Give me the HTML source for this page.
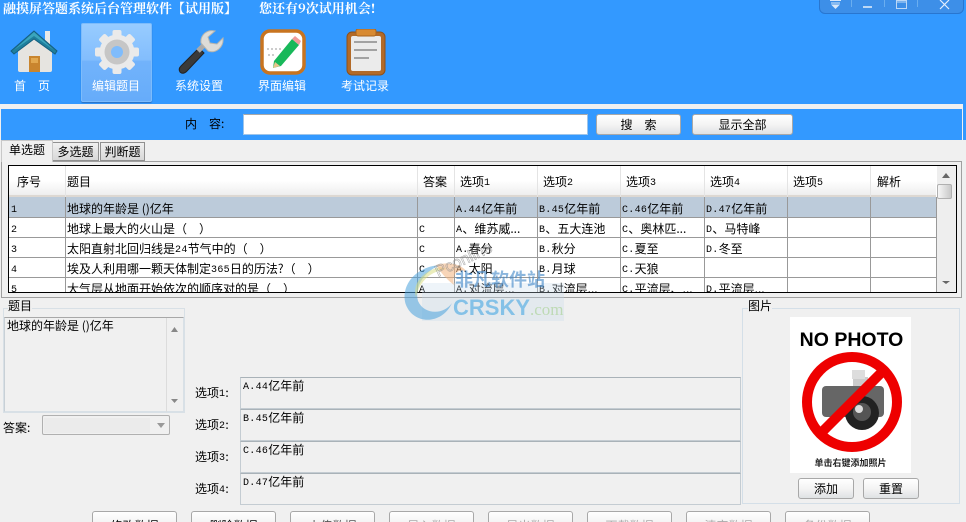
<!DOCTYPE html>
<html style="width:966px;height:522px;overflow:hidden"><head><meta charset="utf-8"><style>
*{box-sizing:border-box}
html,body{margin:0;padding:0}
body{width:966px;height:522px;overflow:hidden;background:#f0f0f0}
#w{width:966px;height:522px;position:relative;overflow:hidden;background:#f0f0f0;font:12px "WenQuanYi Zen Hei","Noto Sans CJK SC",sans-serif;color:#000}
.a{position:absolute}
.t{position:absolute;white-space:pre;line-height:14px}
.nav{color:#fff;font-size:12px;line-height:14px;position:absolute;white-space:pre;top:79px}
.btn{position:absolute;background:linear-gradient(#fff,#f4f4f4 50%,#dfe2e4);border:1px solid #a8a8a8;border-radius:3px;text-align:center;font-size:12px}
.bb{top:511px;width:85px;height:24px;line-height:27px}
.cell{position:absolute;white-space:pre;font-size:12px;line-height:20px;overflow:hidden;margin-top:1px}
.opt{position:absolute;left:240px;width:501px;height:32px;background:#f0f0f0;border:1px solid #c4ccd2;border-top:1px solid #a9b2b8;padding:1px 0 0 2px;font-size:12px;line-height:14px;white-space:pre}
.lab{position:absolute;left:195px;font-size:12px;line-height:14px;white-space:pre}
i{font:10px "Liberation Mono",monospace;letter-spacing:.3px;vertical-align:1px}
.tb{top:142px;height:19px;background:linear-gradient(#f0f0f0,#d8d8d8);border:1px solid #909090;font-size:12px;line-height:18px;text-align:center}
</style></head><body><div id="w">
<div class="a" style="left:0;top:0;width:966px;height:104px;background:#3399ff"></div>
<div class="t" style="left:3px;top:0;color:#fff;font:bold 13px/16px 'Noto Serif CJK SC',serif">融摸屏答题系统后台管理软件【试用版】</div>
<div class="t" style="left:259px;top:0;color:#fff;font:bold 13px/16px 'Noto Serif CJK SC',serif">您还有9次试用机会!</div>

<div class="a" style="left:819px;top:-4px;width:145px;height:18px;background:#3d8fe8;border:1px solid #2876d0;border-radius:0 0 6px 6px"></div>
<svg class="a" style="left:819px;top:0" width="145" height="15"><g stroke="#bcd8f6" fill="none"><path d="M32.500 0V7M65.500 0V7M98.500 0V7" stroke="#6aaef0"/><path d="M11 .5H22M12 3H21" stroke="#d8e8fa"/><path d="M12 4.500H21L16.500 9Z" fill="#d8e8fa" stroke="none"/><path d="M44 7H53" stroke-width="2" stroke="#bcd8f6"/><path d="M77.500 .5H87.500V8.500H77.500Z M78 2H87"/><path d="M121 0L130 9M130 0L121 9" stroke="#e3effc" stroke-width="1.200"/></g></svg>

<div class="a" style="left:81px;top:23px;width:71px;height:79px;border:1px solid #7dbcfb;border-radius:2px;background:linear-gradient(#98ccff 0,#82bdfd 47%,#72b3fb 48%,#66acfa 100%);box-shadow:0 1px 1px #2a6fc0"></div>

<svg class="a" style="left:8px;top:28px" width="52" height="50" viewBox="0 0 52 50">
<path d="M37 3h5v16h-5z" fill="#e8e8e8"/>
<path d="M10 22L27 9L44 22V42a2 2 0 0 1-2 2H12a2 2 0 0 1-2-2Z" fill="#e6e4e0"/>
<path d="M3 23L26 3L49 23L47 26L26 11L6 26Z" fill="#1f7f9d" stroke="#155f7f"/>
<path d="M6 22L26 4L46 22L26 8Z" fill="#3aa5bd"/>
<rect x="21" y="28" width="11" height="16" fill="#c9852e"/><rect x="23" y="30" width="7" height="5" fill="#e2a84f"/>
</svg>

<svg class="a" style="left:94px;top:29px" width="46" height="46" viewBox="0 0 46 46">
<g fill="#eaeaea"><circle cx="23" cy="23" r="17.500"/>
<g><rect x="18.500" y="1" width="9" height="8" rx="2"/><rect x="18.500" y="37" width="9" height="8" rx="2"/><rect x="1" y="18.500" width="8" height="9" rx="2"/><rect x="37" y="18.500" width="8" height="9" rx="2"/></g>
<g transform="rotate(45 23 23)"><rect x="18.500" y="1" width="9" height="8" rx="2"/><rect x="18.500" y="37" width="9" height="8" rx="2"/><rect x="1" y="18.500" width="8" height="9" rx="2"/><rect x="37" y="18.500" width="8" height="9" rx="2"/></g></g>
<circle cx="23" cy="23" r="12.500" fill="#c6c6c6"/><circle cx="23" cy="23" r="6" fill="#7fbcfc"/></svg>

<svg class="a" style="left:177px;top:29px" width="48" height="48" viewBox="0 0 48 48">
<path d="M4 37L22 19L27 24L10 42Q6 46 3 43Q1 40 4 37Z" fill="#3a3a3a" stroke="#222"/>
<path d="M21 22L28 15" stroke="#aaa" stroke-width="5"/>
<path d="M24 14C23 6 30 0 38 2L31 8L33 14L40 15L46 9C47 18 39 25 31 22Z" fill="#dddcd8" stroke="#b5b5b0"/>
</svg>

<svg class="a" style="left:260px;top:29px" width="46" height="46" viewBox="0 0 46 46">
<rect x="2" y="2" width="42" height="42" rx="8" fill="#fff" stroke="#c87420" stroke-width="3.500"/>
<path d="M7 20h14M8 26h8" stroke="#999" stroke-dasharray="2 2"/>
<path d="M14 32L32 10L39 16L21 37L13 39Z" fill="#18b85a"/><path d="M32 10L35 7L41 12L39 16Z" fill="#f09a9a"/><path d="M15 33L13 39L20 37Z" fill="#e8c48c"/>
</svg>

<svg class="a" style="left:345px;top:29px" width="42" height="48" viewBox="0 0 42 48">
<rect x="2" y="3" width="38" height="43" rx="5" fill="#b26a28" stroke="#8f5018"/>
<rect x="6" y="7" width="30" height="35" rx="2" fill="#ebebeb"/>
<rect x="11" y="0" width="20" height="7" rx="2" fill="#d88a32" stroke="#a86420"/>
<path d="M9 13H32M9 21H32M9 29H24" stroke="#8a8a8a" stroke-width="1.500"/>
</svg>

<div class="nav" style="left:14px">首　页</div>
<div class="nav" style="left:92px">编辑题目</div>
<div class="nav" style="left:175px">系统设置</div>
<div class="nav" style="left:258px">界面编辑</div>
<div class="nav" style="left:341px">考试记录</div>

<div class="a" style="left:0;top:104px;width:966px;height:5px;background:#f0f0f0"></div>
<div class="a" style="left:963px;top:104px;width:3px;height:36px;background:#3399ff"></div>
<div class="a" style="left:0;top:104px;width:1px;height:418px;background:#f0f0f0"></div>
<div class="a" style="left:1px;top:109px;width:961px;height:31px;background:#3399ff"></div>
<div class="t" style="left:185px;top:117px;font-size:12px">内　容:</div>
<div class="a" style="left:243px;top:114px;width:345px;height:21px;background:#fff;border:1px solid #9dc4ea;border-top-color:#a8a8a8"></div>
<div class="btn" style="left:596px;top:114px;width:85px;height:21px;line-height:19px">搜　索</div>
<div class="btn" style="left:692px;top:114px;width:101px;height:21px;line-height:19px">显示全部</div>

<div class="a" style="left:1px;top:161px;width:961px;height:137px;border:1px solid #a0a0a0;background:#f0f0f0"></div>
<div class="a tb" style="left:52px;width:47px">多选题</div>
<div class="a tb" style="left:100px;width:45px">判断题</div>
<div class="a" style="left:1px;top:140px;width:52px;height:22px;background:#f0f0f0;border:1px solid #c8c8c8;border-bottom:0;font-size:12px;line-height:18px;text-align:center">单选题</div>

<div class="a" style="left:8px;top:165px;width:949px;height:128px;background:#fff;border:1px solid #000;overflow:hidden">
<div class="a" style="left:0;top:0;width:927px;height:31px;background:linear-gradient(#fff,#fff 50%,#eee);border-bottom:2px solid #ddd8d2"></div>
<div class="a" style="left:0;top:31px;width:927px;height:20px;background:#bccbda"></div>
<div class="a" style="left:0;top:51px;width:927px;height:1px;background:#999"></div>
<div class="a" style="left:0;top:71px;width:927px;height:1px;background:#999"></div>
<div class="a" style="left:0;top:91px;width:927px;height:1px;background:#999"></div>
<div class="a" style="left:0;top:111px;width:927px;height:1px;background:#999"></div>
<div class="a" style="left:56px;top:31px;width:1px;height:96px;background:#999"></div>
<div class="a" style="left:408px;top:31px;width:1px;height:96px;background:#999"></div>
<div class="a" style="left:445px;top:31px;width:1px;height:96px;background:#999"></div>
<div class="a" style="left:528px;top:31px;width:1px;height:96px;background:#999"></div>
<div class="a" style="left:611px;top:31px;width:1px;height:96px;background:#999"></div>
<div class="a" style="left:695px;top:31px;width:1px;height:96px;background:#999"></div>
<div class="a" style="left:778px;top:31px;width:1px;height:96px;background:#999"></div>
<div class="a" style="left:861px;top:31px;width:1px;height:96px;background:#999"></div>
<div class="a" style="left:927px;top:31px;width:1px;height:96px;background:#999"></div>
<div class="a" style="left:56px;top:0;width:1px;height:31px;background:#e4e4e4"></div>
<div class="a" style="left:408px;top:0;width:1px;height:31px;background:#e4e4e4"></div>
<div class="a" style="left:445px;top:0;width:1px;height:31px;background:#e4e4e4"></div>
<div class="a" style="left:528px;top:0;width:1px;height:31px;background:#e4e4e4"></div>
<div class="a" style="left:611px;top:0;width:1px;height:31px;background:#e4e4e4"></div>
<div class="a" style="left:695px;top:0;width:1px;height:31px;background:#e4e4e4"></div>
<div class="a" style="left:778px;top:0;width:1px;height:31px;background:#e4e4e4"></div>
<div class="a" style="left:861px;top:0;width:1px;height:31px;background:#e4e4e4"></div>

<div class="cell" style="left:8px;top:5px">序号</div>
<div class="cell" style="left:58px;top:5px">题目</div>
<div class="cell" style="left:414px;top:5px">答案</div>
<div class="cell" style="left:451px;top:5px">选项<i>1</i></div>
<div class="cell" style="left:534px;top:5px">选项<i>2</i></div>
<div class="cell" style="left:617px;top:5px">选项<i>3</i></div>
<div class="cell" style="left:701px;top:5px">选项<i>4</i></div>
<div class="cell" style="left:784px;top:5px">选项<i>5</i></div>
<div class="cell" style="left:868px;top:5px">解析</div>

<div class="cell" style="left:2px;top:32px"><i>1</i></div><div class="cell" style="left:58px;top:32px">地球的年龄是 ()亿年</div><div class="cell" style="left:447px;top:32px"><i>A.44</i>亿年前</div><div class="cell" style="left:530px;top:32px"><i>B.45</i>亿年前</div><div class="cell" style="left:613px;top:32px"><i>C.46</i>亿年前</div><div class="cell" style="left:697px;top:32px"><i>D.47</i>亿年前</div>
<div class="cell" style="left:2px;top:52px"><i>2</i></div><div class="cell" style="left:58px;top:52px">地球上最大的火山是（　）</div><div class="cell" style="left:410px;top:52px"><i>C</i></div><div class="cell" style="left:447px;top:52px"><i>A</i>、维苏威...</div><div class="cell" style="left:530px;top:52px"><i>B</i>、五大连池</div><div class="cell" style="left:613px;top:52px"><i>C</i>、奥林匹...</div><div class="cell" style="left:697px;top:52px"><i>D</i>、马特峰</div>
<div class="cell" style="left:2px;top:72px"><i>3</i></div><div class="cell" style="left:58px;top:72px">太阳直射北回归线是<i>24</i>节气中的（　）</div><div class="cell" style="left:410px;top:72px"><i>C</i></div><div class="cell" style="left:447px;top:72px"><i>A.</i>春分</div><div class="cell" style="left:530px;top:72px"><i>B.</i>秋分</div><div class="cell" style="left:613px;top:72px"><i>C.</i>夏至</div><div class="cell" style="left:697px;top:72px"><i>D.</i>冬至</div>
<div class="cell" style="left:2px;top:92px"><i>4</i></div><div class="cell" style="left:58px;top:92px">埃及人利用哪一颗天体制定<i>365</i>日的历法?（　）</div><div class="cell" style="left:410px;top:92px"><i>C</i></div><div class="cell" style="left:447px;top:92px"><i>A.</i>太阳</div><div class="cell" style="left:530px;top:92px"><i>B.</i>月球</div><div class="cell" style="left:613px;top:92px"><i>C.</i>天狼</div>
<div class="cell" style="left:2px;top:112px"><i>5</i></div><div class="cell" style="left:58px;top:112px">大气层从地面开始依次的顺序对的是（　）</div><div class="cell" style="left:410px;top:112px"><i>A</i></div><div class="cell" style="left:447px;top:112px"><i>A.</i>对流层...</div><div class="cell" style="left:530px;top:112px"><i>B.</i>对流层...</div><div class="cell" style="left:613px;top:112px"><i>C.</i>平流层、...</div><div class="cell" style="left:697px;top:112px"><i>D.</i>平流层...</div>

<div class="a" style="left:928px;top:0;width:19px;height:126px;background:#eeeeee"></div>
<div class="a" style="left:928px;top:18px;width:15px;height:15px;background:linear-gradient(90deg,#f6f6f6,#c8c8c8);border:1px solid #b0b0b0;border-radius:2px"></div>
<svg class="a" style="left:928px;top:0" width="19" height="126"><path d="M5 12L9 7L13 12Z" fill="#666"/><path d="M5 115H13L9 118Z" fill="#666"/></svg>
</div>

<div class="a" style="left:3px;top:308px;width:182px;height:105px;border:1px solid #d8e0e6"></div>
<div class="t" style="left:8px;top:299px;background:#f0f0f0;font-size:12px">题目</div>
<div class="a" style="left:4px;top:317px;width:180px;height:95px;border-top:1px solid #a8a8a8;border-left:1px solid #c8d0d6;border-right:1px solid #d8e0e6;border-bottom:1px solid #d8e0e6;font-size:12px;line-height:14px;padding:1px 2px">地球的年龄是 ()亿年</div>
<div class="a" style="left:166px;top:318px;width:1px;height:94px;background:#dcdcdc"></div>
<svg class="a" style="left:166px;top:318px" width="18" height="94"><path d="M5 14L8.500 9L12 14Z" fill="#888"/><path d="M5 81H12L8.500 85Z" fill="#888"/></svg>

<div class="t" style="left:3px;top:421px;font-size:12px">答案:</div>
<div class="a" style="left:42px;top:415px;width:128px;height:20px;background:#f0f0f0;border:1px solid #b0b0b0;border-radius:2px"></div>
<div class="a" style="left:44px;top:418px;width:106px;height:15px;background:#ebebeb"></div>
<svg class="a" style="left:155px;top:420px" width="12" height="10"><path d="M2 3H10L6 8Z" fill="#999"/></svg>

<div class="lab" style="top:386px">选项<i>1</i>:</div>
<div class="lab" style="top:418px">选项<i>2</i>:</div>
<div class="lab" style="top:450px">选项<i>3</i>:</div>
<div class="lab" style="top:482px">选项<i>4</i>:</div>
<div class="opt" style="top:377px"><i>A.44</i>亿年前</div>
<div class="opt" style="top:409px"><i>B.45</i>亿年前</div>
<div class="opt" style="top:441px"><i>C.46</i>亿年前</div>
<div class="opt" style="top:473px"><i>D.47</i>亿年前</div>

<div class="a" style="left:742px;top:308px;width:218px;height:196px;border:1px solid #d4dfe8"></div>
<div class="t" style="left:748px;top:299px;background:#f0f0f0;font-size:12px">图片</div>
<div class="a" style="left:790px;top:317px;width:121px;height:156px;background:#fff"></div>
<div class="t" style="left:790px;top:330px;width:123px;text-align:center;font:bold 19.500px/20px 'Liberation Sans',sans-serif">NO PHOTO</div>
<svg class="a" style="left:800px;top:350px" width="104" height="104" viewBox="0 0 104 104">
<rect x="53" y="27" width="15" height="9" fill="#ccc"/><rect x="52" y="20" width="13" height="9" fill="#ddd"/><rect x="22" y="36" width="62" height="31" rx="4" fill="#666"/>
<circle cx="62" cy="63" r="17" fill="#222"/><circle cx="62" cy="62" r="9" fill="#555"/><circle cx="59" cy="59" r="4" fill="#ddd"/>
<circle cx="52" cy="52" r="45" fill="none" stroke="#ee0000" stroke-width="10"/>
<path d="M21 83L83 21" stroke="#ee0000" stroke-width="10"/>
</svg>
<div class="t" style="left:790px;top:457px;width:121px;text-align:center;font:bold 9px/12px 'Noto Sans CJK SC',sans-serif;color:#222">单击右键添加照片</div>
<div class="btn" style="left:798px;top:478px;width:56px;height:21px;line-height:19px">添加</div>
<div class="btn" style="left:863px;top:478px;width:56px;height:21px;line-height:19px">重置</div>

<div class="btn bb" style="left:92px">修改数据</div>
<div class="btn bb" style="left:191px">删除数据</div>
<div class="btn bb" style="left:290px;color:#555">上传数据</div>
<div class="btn bb" style="left:389px;color:#aaa">导入数据</div>
<div class="btn bb" style="left:488px;color:#aaa">导出数据</div>
<div class="btn bb" style="left:587px;color:#aaa">下载数据</div>
<div class="btn bb" style="left:686px;color:#aaa">清空数据</div>
<div class="btn bb" style="left:785px;color:#aaa">备份数据</div>

<svg class="a" style="left:400px;top:235px" width="170" height="90" viewBox="0 0 170 90">
<rect x="22" y="48" width="142" height="38" fill="#c8dcec" opacity=".3"/>
<path d="M40 30C14 32 0 52 6 70C14 90 42 90 52 68C44 80 24 80 18 66C14 50 26 36 40 30Z" fill="#4aa3dc" opacity=".55"/>
<path d="M40 32C22 36 12 50 16 62C20 46 30 36 48 34Z" fill="#d8dc84" opacity=".55"/>
<path d="M36 30C50 26 62 30 66 36C56 34 52 40 54 50C44 42 40 36 36 30Z" fill="#f2b27e" opacity=".55"/>
<text x="55" y="51" font-size="18" font-weight="bold" fill="#3f86c8" opacity=".6" font-family="'Noto Sans CJK SC',sans-serif">非凡软件站</text>
<text x="53" y="80" font-size="22" font-weight="bold" fill="#74bbe6" opacity=".85" font-family="'Liberation Sans',sans-serif">CRSKY<tspan fill="#b8d8ac" font-weight="normal" font-size="17" font-family="'Liberation Serif',serif">.com</tspan></text>
<text x="38" y="42" font-size="16" transform="rotate(-25 38 42)" fill="none" stroke="#8a8a8a" stroke-width=".6" font-family="'Liberation Sans',sans-serif" opacity=".7">Pconline</text>
</svg>
</div></body></html>
